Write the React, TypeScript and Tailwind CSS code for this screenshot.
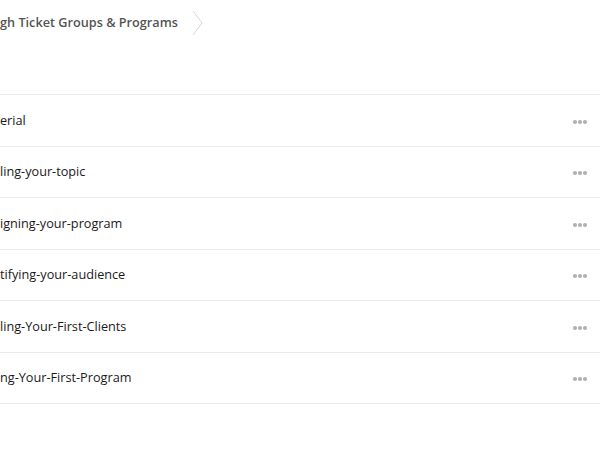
import React from "react";

const rows = [
  "erial",
  "ling-your-topic",
  "igning-your-program",
  "tifying-your-audience",
  "ling-Your-First-Clients",
  "ng-Your-First-Program",
];

function Dots() {
  return (
    <svg width="16" height="6" viewBox="0 0 16 6" className="block mt-[3px]">
      <circle cx="3" cy="3" r="2.1" fill="#b0b0b0" />
      <circle cx="8" cy="3" r="2.1" fill="#b0b0b0" />
      <circle cx="13" cy="3" r="2.1" fill="#b0b0b0" />
    </svg>
  );
}

export default function App() {
  return (
    <div
      className="w-[600px] h-[472px] bg-white overflow-hidden"
      style={{ fontFamily: '"Open Sans", sans-serif' }}
    >
      <div className="h-[94px]">
        <div className="flex items-center h-[45px]">
          <span className="text-[12.7px] font-semibold text-[#555555] whitespace-nowrap">
            gh Ticket Groups &amp; Programs
          </span>
          <svg width="12" height="26" viewBox="0 0 12 26" className="ml-[14px] mt-[1px]">
            <path d="M1 1 L10 13 L1 25" fill="none" stroke="#d8d8d8" strokeWidth="1" />
          </svg>
        </div>
      </div>
      <div className="border-t border-[#ebebeb]">
        {rows.map((r) => (
          <div
            key={r}
            className="h-[51.5px] border-b border-[#ebebeb] flex items-center justify-between pr-[12px]"
          >
            <span className="text-[12.7px] text-[#1a1a1a] whitespace-nowrap">{r}</span>
            <Dots />
          </div>
        ))}
      </div>
    </div>
  );
}
